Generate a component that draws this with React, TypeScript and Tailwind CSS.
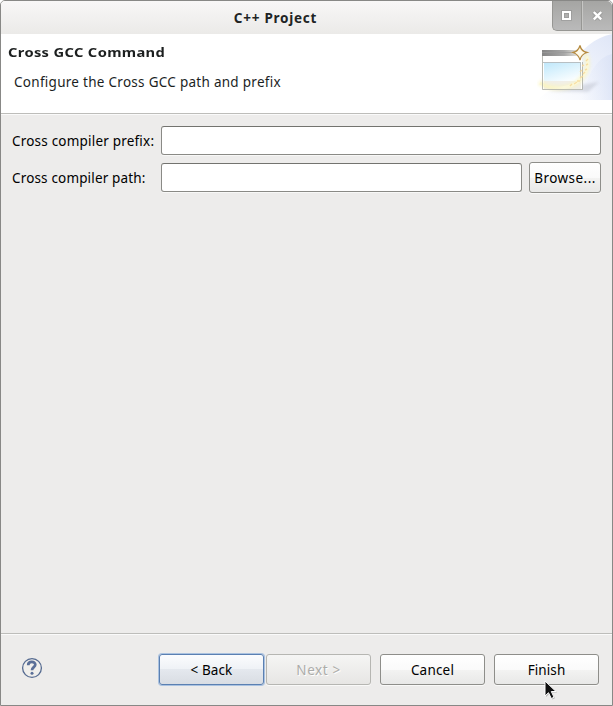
import type { ReactNode } from "react";

function WizardBanner() {
  return (
    <svg width="75" height="66" viewBox="0 0 75 66" className="block">
      <defs>
        <linearGradient id="sky" x1="0" y1="1" x2="1" y2="0">
          <stop offset="0" stopColor="#ffffff" />
          <stop offset="0.45" stopColor="#f3f6fd" />
          <stop offset="1" stopColor="#dfe6f7" />
        </linearGradient>
        <linearGradient id="sweep" x1="0" y1="0" x2="1" y2="0">
          <stop offset="0" stopColor="#dfe6f7" stopOpacity="0" />
          <stop offset="1" stopColor="#d5def4" />
        </linearGradient>
        <linearGradient id="bar" x1="0" y1="0" x2="1" y2="0">
          <stop offset="0" stopColor="#858585" />
          <stop offset="0.55" stopColor="#a8a8a8" />
          <stop offset="1" stopColor="#f6f4ec" />
        </linearGradient>
        <linearGradient id="pane" x1="0" y1="0" x2="0.6" y2="1">
          <stop offset="0" stopColor="#c0e8fb" />
          <stop offset="1" stopColor="#f8fdff" />
        </linearGradient>
        <linearGradient id="trail" x1="0" y1="0" x2="1" y2="0">
          <stop offset="0" stopColor="#fbf3a8" stopOpacity="0.5" />
          <stop offset="0.5" stopColor="#fffce0" />
          <stop offset="1" stopColor="#fff9d2" />
        </linearGradient>
        <filter id="soft" x="-30%" y="-30%" width="160%" height="160%">
          <feGaussianBlur stdDeviation="1.6" />
        </filter>
      </defs>
      <path d="M75 0C57 4 45 15 34 31C24 47 12 57 0 66H75Z" fill="url(#sky)" />
      <path d="M75 20C62 23 52 35 44 66H75Z" fill="url(#sweep)" opacity=".6" />
      <path d="M43 51L62 48L51 58L12 57Z" fill="#a4a9b8" opacity=".35" filter="url(#soft)" />
      <rect x="5" y="16" width="40" height="40" fill="#fff" />
      <rect x="5" y="16" width="40" height="6" fill="url(#bar)" />
      <path d="M5 18.5H34" stroke="#9c9c9c" opacity=".7" />
      <rect x="7" y="29" width="36" height="18" fill="url(#pane)" />
      <path d="M6 28.5H44M43.5 29V47" stroke="#b7bfc3" fill="none" />
      <rect x="7" y="47" width="37" height="8" fill="#f1efe8" />
      <path d="M2 48C14 57 36 55 44 45C51 37 52 28 48 19" fill="none" stroke="#fbf5ba" strokeWidth="6" filter="url(#soft)" opacity=".5" />
      <path d="M3 49C15 57 34 55 43 46C50 39 52 30 50 22" fill="none" stroke="url(#trail)" strokeWidth="3" opacity=".6" />
      <path d="M5.5 22V55.5H45.5V28" fill="none" stroke="#a9aba3" opacity=".8" />
      <path d="M33 52l2-2M37 50l3-2M40 47l3 0M43 44l3-2M43 38l2-2M46 40l2-2M48 36l2-1M45 32l2-1M49 31l2-1M49 27l2-2" stroke="#f7d897" strokeWidth="1.4" opacity=".8" />
      <path d="M43 11.5Q44.2 17.2 50 18.5Q44.2 20.2 43 26Q41.4 20.2 36 18.5Q41.4 17.2 43 11.5Z" fill="#fffae9" stroke="#b58a40" strokeWidth="1.3" />
    </svg>
  );
}

function WindowControls() {
  return (
    <div className="flex h-[30px] w-[60px] rounded-bl-[5px] rounded-tr-[5px] border-b border-l border-[#969693] bg-gradient-to-b from-[#a5a5a3] to-[#bababa]">
      <button aria-label="Maximize" className="flex w-[29px] items-center justify-center border-r border-[#979794]">
        <svg width="12" height="12" viewBox="0 0 12 12">
          <rect x="2" y="2" width="7" height="7" fill="none" stroke="#777" strokeWidth="4" opacity=".3" />
          <rect x="2" y="2" width="7" height="7" fill="none" stroke="#fff" strokeWidth="2" />
        </svg>
      </button>
      <button aria-label="Close" className="flex w-[30px] items-center justify-center border-l border-[#c6c6c4]">
        <svg width="12" height="12" viewBox="0 0 12 12">
          <path d="M1.8 2L9.2 9.4M9.2 2L1.8 9.4" stroke="#777" strokeWidth="4.5" opacity=".3" />
          <path d="M1.8 2L9.2 9.4M9.2 2L1.8 9.4" stroke="#fff" strokeWidth="2.4" />
        </svg>
      </button>
    </div>
  );
}

const normalButton =
  "border-[#8e8e8a] bg-[linear-gradient(#ffffff,#fafafa_50%,#f3f3f2_51%,#e8e8e7)] text-black shadow-[0_1px_0_#f9f9f8]";

function Button({ className, children }: { className: string; children: ReactNode }) {
  return (
    <button className={`flex h-[31px] shrink-0 items-center justify-center whitespace-nowrap rounded-[3px] border pt-px ${className}`}>
      {children}
    </button>
  );
}

const fieldStyle =
  "h-[29px] rounded-[3px] border border-[#8a8a86] border-t-[#73736f] bg-white shadow-[0_1px_0_#f8f8f7] outline-none";

export default function App() {
  return (
    <div className="h-[706px] w-[613px] bg-white font-['Noto_Sans','Open_Sans',sans-serif] text-[13.5px] leading-[20px] text-black">
      <div className="relative flex h-full flex-col overflow-hidden rounded-t-[5px] border border-[#888886] bg-[#edeceb]">
        <header className="flex h-[33px] shrink-0 bg-gradient-to-b from-[#f8f7f7] to-[#ebeae8]">
          <h1 className="w-[551px] pr-[2px] pt-[7px] text-center text-[13.5px] font-bold tracking-[0.75px] text-[#212424]">
            C++ Project
          </h1>
          <WindowControls />
        </header>
        <section className="flex h-[79px] shrink-0 justify-between bg-white text-[#1c1f1f]">
          <div className="pl-[7px] pt-[8px]">
            <h2 className="text-[13px] font-bold">
              <span className="inline-block origin-left scale-x-[1.13] tracking-[0.3px]">Cross GCC Command</span>
            </h2>
            <p className="pl-[6px] pt-[10px] tracking-[0.28px]">Configure the Cross GCC path and prefix</p>
          </div>
          <WizardBanner />
        </section>
        <div className="h-[2px] shrink-0 border-b border-t border-b-[#fafafa] border-t-[#bdbdba]" />
        <main className="flex grow flex-col gap-[7px] pl-[11px] pr-[11px] pt-[11px]">
          <label className="flex h-[29px] items-center">
            <span className="w-[149px] shrink-0 pt-px tracking-[0.2px]">Cross compiler prefix:</span>
            <input className={`${fieldStyle} w-[440px]`} />
          </label>
          <div className="flex h-[31px] items-center">
            <label htmlFor="path" className="w-[149px] shrink-0 pt-px tracking-[0.16px]">Cross compiler path:</label>
            <input id="path" className={`${fieldStyle} mr-[7px] w-[361px]`} />
            <Button className={`w-[72px] ${normalButton}`}>
              <span className="tracking-[0.45px]">Browse...</span>
            </Button>
          </div>
        </main>
        <div className="h-[2px] shrink-0 border-b border-t border-b-[#fafafa] border-t-[#bdbdba]" />
        <footer className="flex h-[70px] shrink-0 items-start pl-[20px] pt-[19px]">
          <svg width="22" height="22" viewBox="0 0 22 22" className="mr-[116px] mt-[3px]" aria-label="Help">
            <circle cx="11" cy="11" r="9.4" fill="#f0efec" stroke="#566b91" strokeWidth="1.3" />
            <path d="M7.2 8.2C7.2 3.9 14.4 4 14.3 7.8C14.2 10.1 11 10.3 11 13.2" fill="none" stroke="#5a6f98" strokeWidth="2.7" />
            <circle cx="11" cy="16.2" r="1.5" fill="#5a6f98" />
          </svg>
          <Button className="mr-[2px] w-[105px] border-[#5b80b2] bg-[linear-gradient(#fbfcfe,#eff2f6_48%,#e4e8ee_50%,#d9dde3)] shadow-[0_0_0_1px_#aac2e0]">
            <span className="tracking-[0.1px]">&lt; Back</span>
          </Button>
          <Button className="mr-[9px] w-[105px] border-[#b6b6b2] bg-[linear-gradient(#f5f5f4,#e7e6e4)] text-[#acaca9] shadow-[0_1px_0_#f9f9f8] [text-shadow:1px_1px_0_white]">
            <span className="tracking-[0.6px]">Next &gt;</span>
          </Button>
          <Button className={`mr-[9px] w-[105px] ${normalButton}`}>
            <span className="tracking-[0.2px]">Cancel</span>
          </Button>
          <Button className={`w-[105px] ${normalButton}`}>
            <span className="tracking-[0.1px]">Finish</span>
          </Button>
        </footer>
        <svg width="14" height="20" viewBox="0 0 14 20" className="absolute left-[543px] top-[679px]">
          <path d="M1 1V16L4.5 12.7L7.3 18.5L10 17.2L7.3 11.5H12Z" fill="#555" opacity=".35" transform="translate(1 1)" />
          <path d="M1 1V16L4.5 12.7L7.3 18.5L10 17.2L7.3 11.5H12Z" fill="#111" stroke="#fff" />
        </svg>
      </div>
    </div>
  );
}
